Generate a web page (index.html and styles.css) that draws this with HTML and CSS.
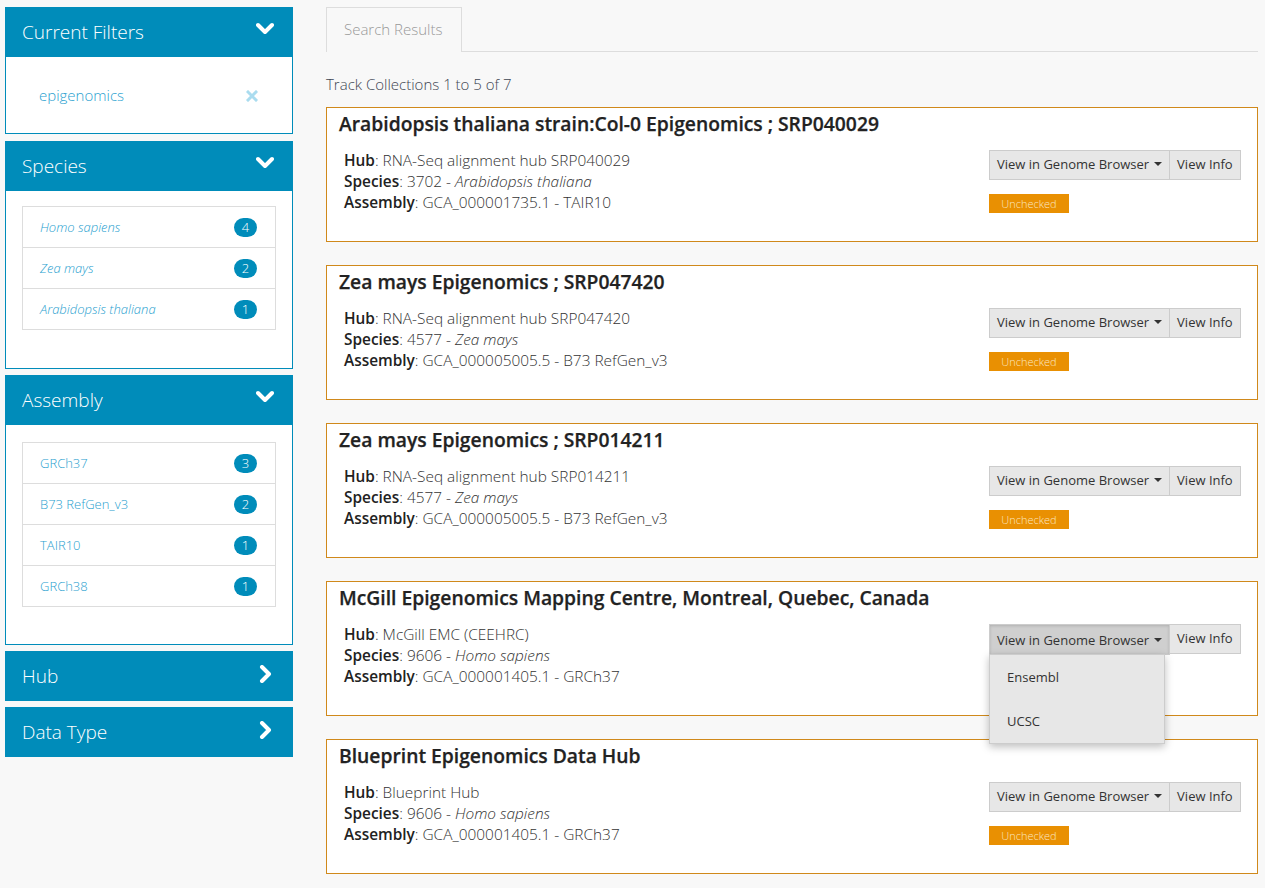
FILE: index.html
```html
<!DOCTYPE html>
<html>
<head>
<meta charset="utf-8">
<link rel="stylesheet" href="styles.css">
</head>
<body>
<div class="page">
  <aside class="sidebar">
    <section class="panel">
      <div class="panel-head"><span>Current Filters</span>
        <svg class="chev" width="18" height="14" viewBox="0 0 18 14"><polyline points="2,3 9,10 16,3" fill="none" stroke="#fff" stroke-width="4" stroke-linecap="round" stroke-linejoin="round"/></svg>
      </div>
      <div class="panel-body filters">
        <span class="filter-name">epigenomics</span>
        <svg class="xicon" width="12" height="12" viewBox="0 0 12 12"><path d="M2 2 L10 10 M10 2 L2 10" stroke="#aadcef" stroke-width="3" stroke-linecap="square"/></svg>
      </div>
    </section>
    <section class="panel">
      <div class="panel-head"><span>Species</span>
        <svg class="chev" width="18" height="14" viewBox="0 0 18 14"><polyline points="2,3 9,10 16,3" fill="none" stroke="#fff" stroke-width="4" stroke-linecap="round" stroke-linejoin="round"/></svg>
      </div>
      <div class="panel-body">
        <ul class="facet">
          <li><span class="it">Homo sapiens</span><span class="badge">4</span></li>
          <li><span class="it">Zea mays</span><span class="badge">2</span></li>
          <li><span class="it">Arabidopsis thaliana</span><span class="badge">1</span></li>
        </ul>
      </div>
    </section>
    <section class="panel">
      <div class="panel-head"><span>Assembly</span>
        <svg class="chev" width="18" height="14" viewBox="0 0 18 14"><polyline points="2,3 9,10 16,3" fill="none" stroke="#fff" stroke-width="4" stroke-linecap="round" stroke-linejoin="round"/></svg>
      </div>
      <div class="panel-body assembly">
        <ul class="facet">
          <li><span>GRCh37</span><span class="badge">3</span></li>
          <li><span>B73 RefGen_v3</span><span class="badge">2</span></li>
          <li><span>TAIR10</span><span class="badge">1</span></li>
          <li><span>GRCh38</span><span class="badge">1</span></li>
        </ul>
      </div>
    </section>
    <section class="panel">
      <div class="panel-head"><span>Hub</span>
        <svg class="chev right" width="14" height="18" viewBox="0 0 14 18"><polyline points="4,2 11,9 4,16" fill="none" stroke="#fff" stroke-width="4" stroke-linecap="round" stroke-linejoin="round"/></svg>
      </div>
    </section>
    <section class="panel">
      <div class="panel-head"><span>Data Type</span>
        <svg class="chev right" width="14" height="18" viewBox="0 0 14 18"><polyline points="4,2 11,9 4,16" fill="none" stroke="#fff" stroke-width="4" stroke-linecap="round" stroke-linejoin="round"/></svg>
      </div>
    </section>
  </aside>

  <main class="main">
    <div class="tabs"><div class="tab">Search Results</div></div>
    <p class="count">Track Collections 1 to 5 of 7</p>

    <div class="card">
      <h2>Arabidopsis thaliana strain:Col-0 Epigenomics ; SRP040029</h2>
      <div class="card-row">
        <div class="info">
          <div><b>Hub</b>: RNA-Seq alignment hub SRP040029</div>
          <div><b>Species</b>: 3702 - <i>Arabidopsis thaliana</i></div>
          <div><b>Assembly</b>: GCA_000001735.1 - TAIR10</div>
        </div>
        <div class="actions">
          <div class="btn-group"><span class="btn">View in Genome Browser<span class="caret"></span></span><span class="btn">View Info</span></div>
          <span class="status">Unchecked</span>
        </div>
      </div>
    </div>

    <div class="card">
      <h2>Zea mays Epigenomics ; SRP047420</h2>
      <div class="card-row">
        <div class="info">
          <div><b>Hub</b>: RNA-Seq alignment hub SRP047420</div>
          <div><b>Species</b>: 4577 - <i>Zea mays</i></div>
          <div><b>Assembly</b>: GCA_000005005.5 - B73 RefGen_v3</div>
        </div>
        <div class="actions">
          <div class="btn-group"><span class="btn">View in Genome Browser<span class="caret"></span></span><span class="btn">View Info</span></div>
          <span class="status">Unchecked</span>
        </div>
      </div>
    </div>

    <div class="card">
      <h2>Zea mays Epigenomics ; SRP014211</h2>
      <div class="card-row">
        <div class="info">
          <div><b>Hub</b>: RNA-Seq alignment hub SRP014211</div>
          <div><b>Species</b>: 4577 - <i>Zea mays</i></div>
          <div><b>Assembly</b>: GCA_000005005.5 - B73 RefGen_v3</div>
        </div>
        <div class="actions">
          <div class="btn-group"><span class="btn">View in Genome Browser<span class="caret"></span></span><span class="btn">View Info</span></div>
          <span class="status">Unchecked</span>
        </div>
      </div>
    </div>

    <div class="card">
      <h2>McGill Epigenomics Mapping Centre, Montreal, Quebec, Canada</h2>
      <div class="card-row">
        <div class="info">
          <div><b>Hub</b>: McGill EMC (CEEHRC)</div>
          <div><b>Species</b>: 9606 - <i>Homo sapiens</i></div>
          <div><b>Assembly</b>: GCA_000001405.1 - GRCh37</div>
        </div>
        <div class="actions">
          <div class="btn-group"><span class="btn active">View in Genome Browser<span class="caret"></span></span><span class="btn">View Info</span>
            <ul class="dropdown">
              <li>Ensembl</li>
              <li>UCSC</li>
            </ul>
          </div>
        </div>
      </div>
    </div>

    <div class="card">
      <h2>Blueprint Epigenomics Data Hub</h2>
      <div class="card-row">
        <div class="info">
          <div><b>Hub</b>: Blueprint Hub</div>
          <div><b>Species</b>: 9606 - <i>Homo sapiens</i></div>
          <div><b>Assembly</b>: GCA_000001405.1 - GRCh37</div>
        </div>
        <div class="actions">
          <div class="btn-group"><span class="btn">View in Genome Browser<span class="caret"></span></span><span class="btn">View Info</span></div>
          <span class="status">Unchecked</span>
        </div>
      </div>
    </div>
  </main>
</div>
</body>
</html>
```

FILE: styles.css
```css
* { box-sizing: border-box; }
html, body { margin: 0; padding: 0; }
body {
  background: #f8f8f8;
  font-family: "Open Sans", "Noto Sans", sans-serif;
  color: #333;
  font-weight: 300;
}
.page {
  display: flex;
  align-items: flex-start;
  padding: 7px 7px 0 5px;
  gap: 33px;
}
.sidebar {
  width: 288px;
  flex: none;
  display: flex;
  flex-direction: column;
  gap: 6px;
}
.panel-head {
  height: 50px;
  background: #008cba;
  color: #fff;
  font-size: 19px;
  font-weight: 300;
  display: flex;
  align-items: center;
  justify-content: space-between;
  padding: 0 19px 0 17px;
}
.chev { position: relative; top: -3px; }
.chev.right { top: -2px; margin-right: 2px; }
.panel-body {
  background: #fff;
  border: 1px solid #008cba;
  border-top: none;
  padding: 15px 16px 38px 16px;
}
.panel-body.assembly { padding-top: 17px; padding-bottom: 37px; }
.panel:first-child { margin-bottom: 1px; }
.filters {
  height: 77px;
  padding: 0 30px 0 33px;
  display: flex;
  align-items: center;
  justify-content: space-between;
}
.filter-name {
  color: #2aa1cf;
  font-size: 15px;
}
.xicon { position: relative; top: 1px; margin-right: 4px; }
.facet {
  list-style: none;
  margin: 0;
  padding: 0;
  border: 1px solid #ddd;
}
.facet li {
  height: 41px;
  display: flex;
  align-items: center;
  justify-content: space-between;
  padding: 0 18px 0 17px;
  color: #2aa1cf;
  font-size: 13px;
  border-top: 1px solid #ddd;
}
.facet li:first-child { border-top: none; height: 40px; }
.facet .it { font-style: italic; }
.badge {
  background: #008cba;
  color: #fff;
  font-size: 13px;
  min-width: 23px;
  height: 19px;
  border-radius: 10px;
  display: inline-flex;
  align-items: center;
  justify-content: center;
}
.main {
  flex: 1;
  min-width: 0;
}
.tabs {
  border-bottom: 1px solid #ddd;
  height: 45px;
  display: flex;
}
.tab {
  width: 136px;
  height: 45px;
  border: 1px solid #ddd;
  border-bottom: none;
  background: #f8f8f8;
  color: #999;
  font-size: 15px;
  padding: 11px 0 0 17px;
}
.count {
  margin: 22px 0 12px;
  font-size: 15px;
  line-height: 21px;
  color: #3d4552;
}
.card {
  background: #fff;
  border: 1px solid #d0891b;
  padding: 3px 16px 28px 12px;
  margin-bottom: 23px;
}
.card h2 {
  margin: 0;
  font-size: 19.3px;
  line-height: 26px;
  font-weight: 600;
  color: #222;
  -webkit-text-stroke: 0.25px #222;
}
.card-row {
  display: flex;
  justify-content: space-between;
  align-items: flex-start;
  margin-top: 13px;
}
.info {
  margin-left: 5px;
  font-size: 15.4px;
  line-height: 21px;
  color: #333;
}
.info b { font-weight: 600; color: #222; }
.actions {
  width: 252px;
  display: flex;
  flex-direction: column;
  align-items: flex-start;
  gap: 14px;
  height: 63px;
}
.btn-group {
  display: flex;
  position: relative;
}
.btn {
  height: 30px;
  display: inline-flex;
  align-items: center;
  padding: 0 7px 2px;
  background: #e7e7e7;
  border: 1px solid #ccc;
  font-size: 13px;
  font-weight: 400;
  color: #333;
}
.btn + .btn { border-left: none; }
.btn.active {
  background: #cfcfcf;
  box-shadow: inset 0 1px 3px rgba(0,0,0,0.15);
  height: 31px;
  padding-top: 1px;
  padding-bottom: 0;
}
.caret {
  width: 0;
  height: 0;
  border-left: 4px solid transparent;
  border-right: 4px solid transparent;
  border-top: 4px solid #333;
  margin-left: 5px;
}
.status {
  width: 80px;
  height: 19px;
  background: #e99002;
  color: #fbe6c1;
  font-size: 11px;
  display: flex;
  align-items: center;
  justify-content: center;
}
.dropdown {
  position: absolute;
  top: 30px;
  left: 0;
  width: 176px;
  margin: 0;
  padding: 0;
  list-style: none;
  background: #e7e7e7;
  border: 1px solid #ccc;
  box-shadow: 0 3px 8px rgba(0,0,0,0.25);
  z-index: 5;
}
.dropdown li {
  height: 44px;
  display: flex;
  align-items: center;
  padding-left: 17px;
  font-size: 13px;
  font-weight: 400;
  color: #333;
}
```
